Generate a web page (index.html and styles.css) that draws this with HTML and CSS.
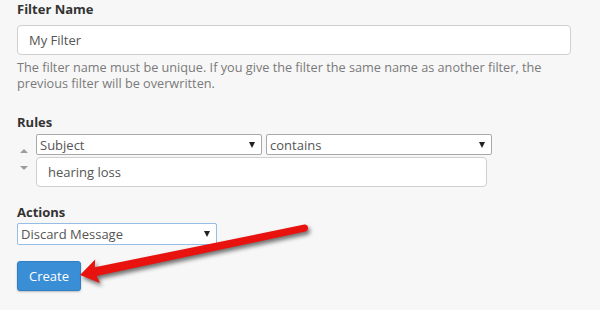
FILE: index.html
```html
<!DOCTYPE html>
<html>
<head>
<meta charset="utf-8">
<link rel="stylesheet" href="styles.css">
</head>
<body>
<div class="page">
  <form class="form">
    <div class="group group-name">
      <label class="field-label">Filter Name</label>
      <div class="text-input wide">My Filter</div>
      <p class="help">The filter name must be unique. If you give the filter the same name as another filter, the previous filter will be overwritten.</p>
    </div>

    <div class="group group-rules">
      <label class="field-label">Rules</label>
      <div class="rule">
        <div class="movers">
          <span class="tri up"></span>
          <span class="tri down"></span>
        </div>
        <div class="rule-body">
          <div class="selects">
            <div class="select rule-select"><span>Subject</span><span class="caret"></span></div>
            <div class="select rule-select"><span>contains</span><span class="caret"></span></div>
          </div>
          <div class="text-input rule-value">hearing loss</div>
        </div>
      </div>
    </div>

    <div class="group group-actions">
      <label class="field-label">Actions</label>
      <div class="select action-select"><span>Discard Message</span><span class="caret"></span></div>
    </div>

    <button type="button" class="btn-primary">Create</button>
  </form>

  <svg class="annotation" width="600" height="310" viewBox="0 0 600 310">
    <path d="M80 275 L95.2 259.5 L94.8 267.3 L304.3 224.6 A3.5 3.5 0 0 1 305.7 231.4 L96.6 276.1 L100 283 Z" fill="#e8120f"/>
  </svg>
</div>
</body>
</html>
```

FILE: styles.css
```css
html, body {
  margin: 0;
  padding: 0;
  background: #f7f7f7;
}

body {
  font-family: "Open Sans", "DejaVu Sans", sans-serif;
  font-size: 13px;
  color: #333;
}

.page {
  position: relative;
  width: 600px;
  height: 310px;
  overflow: hidden;
}

.form {
  padding: 0 29px 0 17px;
}

.field-label {
  display: block;
  font-weight: 700;
  font-size: 13px;
  line-height: 18px;
  color: #333;
}

.group-name .field-label {
  margin-bottom: 7px;
}

.text-input {
  box-sizing: border-box;
  height: 30px;
  border: 1px solid #cfcfcf;
  border-radius: 4px;
  background: #fff;
  padding: 0 11px;
  line-height: 28px;
  font-size: 13px;
  color: #555;
}

.wide {
  width: 554px;
}

.help {
  margin: 4px 0 0;
  font-size: 12.7px;
  line-height: 16px;
  color: #7a7a7a;
  width: 554px;
}

.group-rules {
  margin-top: 22px;
}

.group-rules .field-label {
  margin-bottom: 3px;
}

.rule {
  display: flex;
}

.movers {
  width: 19px;
  box-sizing: border-box;
  padding: 15px 0 0 3px;
  display: flex;
  flex-direction: column;
  gap: 13px;
}

.tri {
  display: block;
  width: 0;
  height: 0;
  border-left: 4px solid transparent;
  border-right: 4px solid transparent;
}

.tri.up {
  border-bottom: 4px solid #9c9c9c;
}

.tri.down {
  border-top: 4px solid #9c9c9c;
}

.rule-body {
  display: flex;
  flex-direction: column;
  gap: 2px;
}

.selects {
  display: flex;
  gap: 4px;
}

.select {
  box-sizing: border-box;
  height: 21px;
  border: 1px solid #a9a9a9;
  border-radius: 2px;
  background: #fff;
  display: flex;
  align-items: center;
  justify-content: space-between;
  padding: 0 6px 0 3px;
  font-size: 13px;
  color: #555;
}

.caret {
  width: 0;
  height: 0;
  border-left: 3px solid transparent;
  border-right: 3px solid transparent;
  border-top: 6px solid #222;
}

.rule-select {
  width: 226px;
}

.rule-value {
  width: 451px;
}

.group-actions {
  margin-top: 16px;
}

.group-actions .field-label {
  margin-bottom: 2px;
}

.action-select {
  width: 200px;
  height: 22px;
  border-color: #96bde6;
}

.btn-primary {
  display: block;
  margin-top: 16px;
  width: 64px;
  height: 30px;
  border: 1px solid #2f7fc4;
  border-radius: 3px;
  background: #3a8ed6;
  color: #fff;
  font-family: "Open Sans", "DejaVu Sans", sans-serif;
  font-size: 13px;
  padding: 0;
  box-shadow: 0 1px 2px rgba(0, 0, 0, 0.25);
}

.annotation {
  position: absolute;
  top: 0;
  left: 0;
  pointer-events: none;
  filter: drop-shadow(2px 3px 2px rgba(0, 0, 0, 0.55));
}
```
